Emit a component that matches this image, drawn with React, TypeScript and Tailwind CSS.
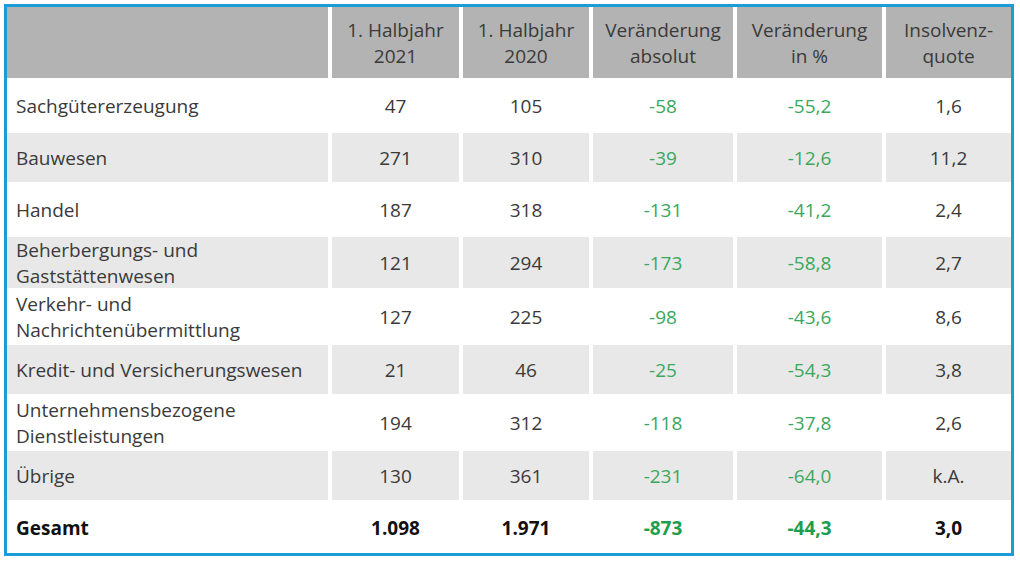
import React from "react";

type Row = {
  label: string[];
  a: string;
  b: string;
  c: string;
  d: string;
  e: string;
  gray: boolean;
  bold?: boolean;
};

const rows: Row[] = [
  { label: ["Sachgütererzeugung"], a: "47", b: "105", c: "-58", d: "-55,2", e: "1,6", gray: false },
  { label: ["Bauwesen"], a: "271", b: "310", c: "-39", d: "-12,6", e: "11,2", gray: true },
  { label: ["Handel"], a: "187", b: "318", c: "-131", d: "-41,2", e: "2,4", gray: false },
  { label: ["Beherbergungs- und", "Gaststättenwesen"], a: "121", b: "294", c: "-173", d: "-58,8", e: "2,7", gray: true },
  { label: ["Verkehr- und", "Nachrichtenübermittlung"], a: "127", b: "225", c: "-98", d: "-43,6", e: "8,6", gray: false },
  { label: ["Kredit- und Versicherungswesen"], a: "21", b: "46", c: "-25", d: "-54,3", e: "3,8", gray: true },
  { label: ["Unternehmensbezogene", "Dienstleistungen"], a: "194", b: "312", c: "-118", d: "-37,8", e: "2,6", gray: false },
  { label: ["Übrige"], a: "130", b: "361", c: "-231", d: "-64,0", e: "k.A.", gray: true },
  { label: ["Gesamt"], a: "1.098", b: "1.971", c: "-873", d: "-44,3", e: "3,0", gray: false, bold: true },
];

const headers: string[][] = [
  ["1. Halbjahr", "2021"],
  ["1. Halbjahr", "2020"],
  ["Veränderung", "absolut"],
  ["Veränderung", "in %"],
  ["Insolvenz-", "quote"],
];

export default function App() {
  return (
    <div
      className="w-[1020px] h-[561px] bg-white pt-[4px] pl-[4px]"
      style={{ fontFamily: '"Open Sans", "Noto Sans", sans-serif' }}
    >
      <div className="w-[1010px] h-[552px] border-[3px] border-[#1b9bd7] bg-white">
        <div className="grid grid-cols-[321px_127px_126px_140px_145px_125px] grid-rows-[71px_49px_49px_49px_51px_51px_49px_51px_49px_1fr] gap-x-[4px] gap-y-[3px] h-full text-[19px] leading-[26px] text-[#3a3a3a]">
          <div className="bg-[#b3b3b3]" />
          {headers.map((h, i) => (
            <div key={i} className="bg-[#b3b3b3] flex flex-col items-center justify-center text-center">
              {h.map((l, j) => (
                <span key={j}>{l}</span>
              ))}
            </div>
          ))}
          {rows.map((r, i) => {
            const bg = r.gray ? "bg-[#e8e8e8]" : "bg-white";
            const w = r.bold ? "font-bold text-[#111111]" : "";
            const g = r.bold ? "font-bold text-[#1e9e4c]" : "text-[#3aa85c]";
            return (
              <React.Fragment key={i}>
                <div className={`${bg} ${w} flex flex-col justify-center pl-[9px]`}>
                  {r.label.map((l, j) => (
                    <span key={j}>{l}</span>
                  ))}
                </div>
                <div className={`${bg} ${w} flex items-center justify-center`}>{r.a}</div>
                <div className={`${bg} ${w} flex items-center justify-center`}>{r.b}</div>
                <div className={`${bg} ${g} flex items-center justify-center`}>{r.c}</div>
                <div className={`${bg} ${g} flex items-center justify-center`}>{r.d}</div>
                <div className={`${bg} ${w} flex items-center justify-center`}>{r.e}</div>
              </React.Fragment>
            );
          })}
        </div>
      </div>
    </div>
  );
}
